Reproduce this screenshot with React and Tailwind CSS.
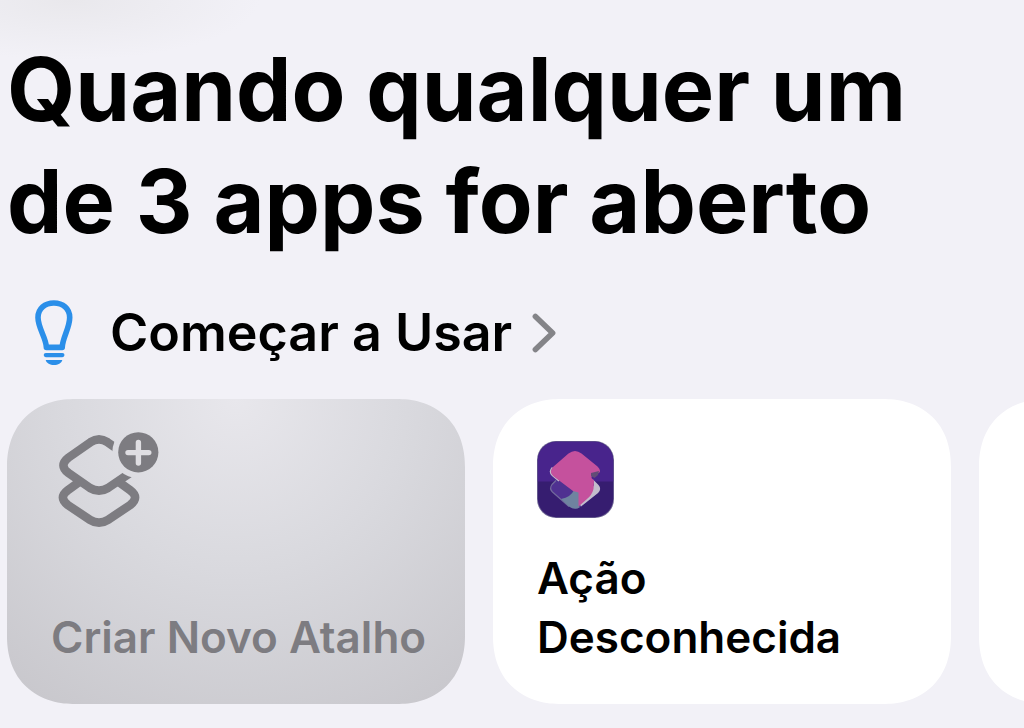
import { useId } from 'react';

function BulbIcon({ className }) {
    return (
        <svg className={className} viewBox="0 0 40 66" fill="none" aria-hidden="true">
            <path
                d="M12.4 47.4 H28.2 C28.4 38 35.7 28 35.7 17.5 C35.7 8.6 28.8 3 19.9 3 C11 3 4 8.6 4 17.5 C4 28 12.2 38 12.4 47.4 Z"
                stroke="#2b8fe9"
                strokeWidth="5.6"
                strokeLinejoin="round"
            />
            <rect x="9.7" y="53" width="20.8" height="4.2" rx="2.1" fill="#2b8fe9" />
            <path d="M11.7 60 H28.3 C27.4 63.2 24 65 20 65 C16 65 12.6 63.2 11.7 60 Z" fill="#2b8fe9" />
        </svg>
    );
}

function ChevronIcon({ className }) {
    return (
        <svg className={className} viewBox="0 0 24 40" fill="none" aria-hidden="true">
            <path d="M3.4 3.4 L20.6 20 L3.4 36.6" stroke="#848488" strokeWidth="5.6" strokeLinecap="round" strokeLinejoin="round" />
        </svg>
    );
}

function NewShortcutIcon({ className }) {
    const maskId = useId();

    return (
        <svg className={className} viewBox="0 0 101 96" fill="none" aria-hidden="true">
            <mask id={maskId} maskUnits="userSpaceOnUse" x="0" y="0" width="101" height="96">
                <rect width="101" height="96" fill="white" />
                <circle cx="80.3" cy="20.3" r="26" fill="black" />
            </mask>
            <g stroke="#7d7c81" strokeWidth="8.6" mask={`url(#${maskId})`}>
                <path d="M32.5 10.2 Q41 4.6 49.5 10.2 L72 26 Q81 33.5 72 41 L50 56 Q41 61.4 32 56 L10.5 41 Q0.4 33.5 10.5 25.6 Z" />
                <path d="M20.5 50.5 L9.8 58.2 Q0 65.5 9.8 73 L32 87.8 Q41 93.6 50 87.8 L72.2 73 Q82 65.5 72.2 58.2 L61.5 50.5" />
            </g>
            <circle cx="80.3" cy="20.3" r="20.1" fill="#7d7c81" />
            <path d="M70 20.6 H90.8 M80.4 10.4 V31" stroke="#dfdee2" strokeWidth="5.4" strokeLinecap="round" />
        </svg>
    );
}

function ShortcutsAppIcon({ className }) {
    return (
        <svg className={className} viewBox="0 0 77 77" fill="none" aria-hidden="true">
            <rect width="77" height="77" rx="19" fill="#6f6794" />
            <rect x="0.8" y="0.8" width="75.4" height="75.4" rx="18.4" fill="#361d70" />
            <path d="M0.8 40.6 V19.2 A18.4 18.4 0 0 1 19.2 0.8 H57.8 A18.4 18.4 0 0 1 76.2 19.2 V40.6 Z" fill="#48248c" />
            <path d="M20 38 L15 43.5 Q12 47.5 15.5 51 L32 65.5 Q38 70 44 65.5 L61 52 Q65 48 61.5 44 L56 38 Z" fill="#4f3191" />
            <path d="M19 39.5 L15 43.5 Q12 47.5 15.5 51 L32 65.5" stroke="#726a9c" strokeWidth="1.2" />
            <path d="M24 58 Q34 56 37 49 L42.5 51 V66.4 Q38 69.6 32 65.6 Z" fill="#6f83a0" />
            <path d="M56 38.5 L61.5 44 Q65 48 61 52 L44 65.5 L42 62 L51 54 L57 44 Z" fill="#c3bdcc" />
            <path
                d="M15.5 26.5 Q11.5 30.7 15.5 34.5 L22 40"
                stroke="#c3bdcc"
                strokeWidth="1.6"
            />
            <path
                d="M31.5 12.4 Q38 7.4 44.5 12.4 L60.5 25.5 Q64.6 29.5 62 32 L55 33.5 L54.5 37 L57 39.5 L56.5 48 Q55 54 50 58 L41.5 65.5 V51.5 L36 50 L16.2 35 Q11.8 30.7 16 26 Z"
                fill="#c5519d"
            />
            <path d="M54 32 L62 30 L61 34 L57.5 37 L54 35 Z" fill="#624c76" />
        </svg>
    );
}

const cardBase =
    'flex h-[305px] w-[458px] shrink-0 flex-col items-start justify-between rounded-[68px] text-left text-[44px] leading-[59px] font-semibold [corner-shape:superellipse(1.15)]';

export default function App() {
    return (
        <main className="min-h-screen overflow-hidden bg-[#f2f1f7] bg-[radial-gradient(ellipse_190px_60px_at_70px_0px,#e9e8ec,#f2f1f7)] pb-6 pl-[7px] font-['Inter',sans-serif] text-black">
            <h1 className="pt-[33px] pr-20 text-[88px] leading-[112px] font-bold">Quando qualquer um de 3 apps for aberto</h1>

            <section>
                <h2 className="mt-9 text-[52px] leading-[80px] font-semibold">
                    <a href="#comecar" className="flex items-center pl-[27px]">
                        <BulbIcon className="h-[66px] w-10 shrink-0" />
                        <span className="ml-9">Começar a Usar</span>
                        <ChevronIcon className="ml-5 h-10 w-6 shrink-0" />
                    </a>
                </h2>

                <div className="mt-[26px] flex gap-7">
                    <button
                        type="button"
                        className={`${cardBase} bg-[radial-gradient(circle_at_50%_0%,#e8e7ec,#d9d9de_45%,#c7c6cb)] px-11 pt-[33px] pb-[37px] text-[#7d7c81]`}
                    >
                        <NewShortcutIcon className="ml-[7px] h-24 w-[101px]" />
                        <span className="whitespace-nowrap">Criar Novo Atalho</span>
                    </button>
                    <button type="button" className={`${cardBase} bg-white px-11 pt-[42px] pb-[37px]`}>
                        <ShortcutsAppIcon className="size-[77px]" />
                        <span>Ação Desconhecida</span>
                    </button>
                    <div className={`${cardBase} bg-white`} />
                </div>
            </section>
        </main>
    );
}
